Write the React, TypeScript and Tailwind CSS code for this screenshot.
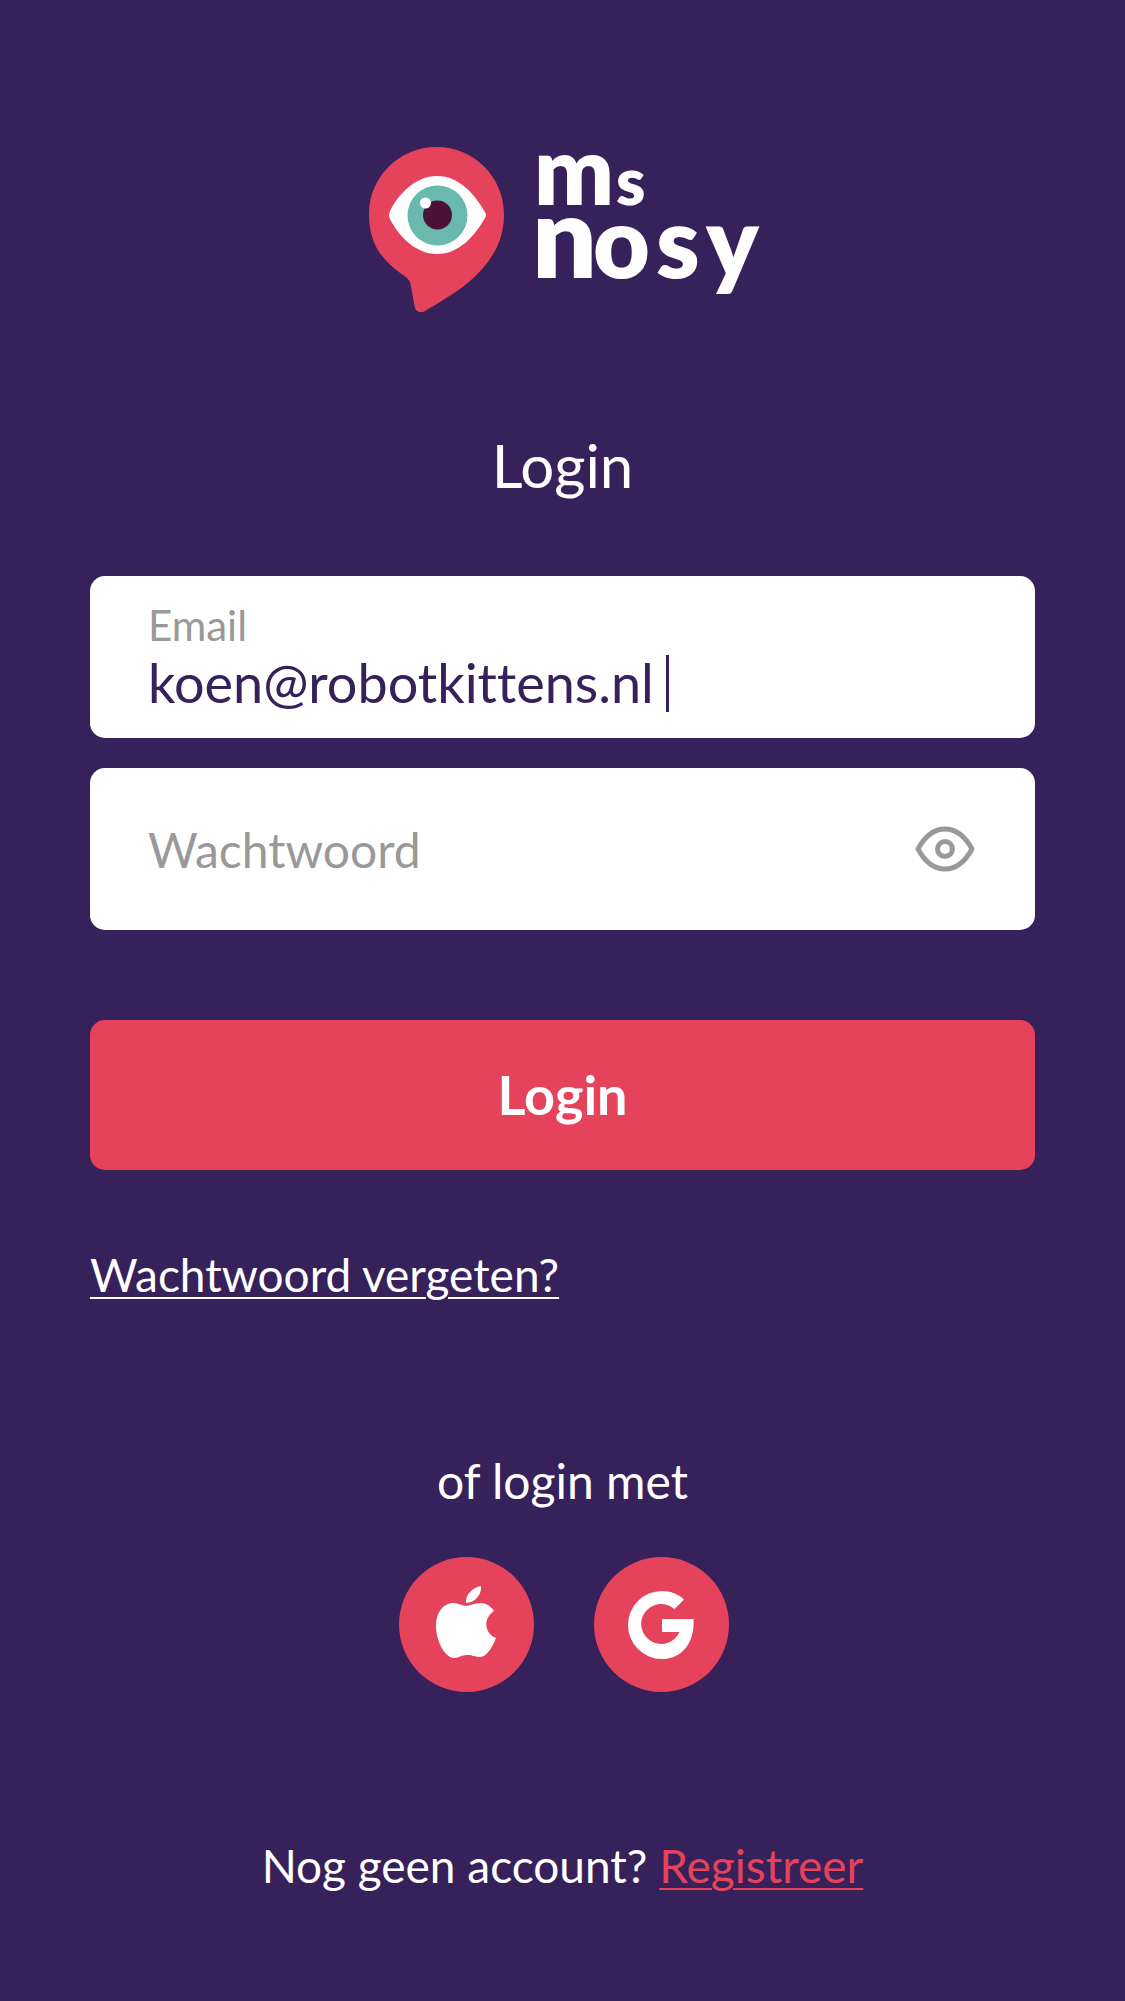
import { useState } from "react";

function Logo() {
  return (
    <svg viewBox="0 0 388 168" className="h-[168px] w-[388px] overflow-visible" role="img" aria-label="ms nosy">
      <path
        d="M67.500 0C105 0 135 30 135 67.500C135 98 119 118 101 134C87 146 69 156 56 164C51 167 46 164 45.500 159L41.500 137C41 133 38 131 34 128C14 114 0 98 0 67.500C0 30 30 0 67.500 0Z"
        fill="#e4435b"
      />
      <path
        d="M21 64C29 48 46 29 68 29C91 29 106 48 116 65Q118 68 116 71C106 88 91 107 68 107C46 107 29 88 21 72Q19 68 21 64Z"
        fill="#fff"
      />
      <circle cx="68.500" cy="68.500" r="30" fill="#6bb8ae" />
      <circle cx="68.500" cy="68" r="14.500" fill="#4b1237" />
      <circle cx="56.500" cy="56" r="5.500" fill="#fff" />
      <g fill="#fff" fontFamily="Lato, sans-serif" fontWeight="800">
        <text y="58" x="165" fontSize="94">m</text>
        <text y="58" x="247" fontSize="66">s</text>
        <text y="131" x="163" fontSize="114">n</text>
        <text y="131" x="224" fontSize="98">o</text>
        <text y="131" x="287" fontSize="98">s</text>
        <text y="131" x="337" fontSize="98">y</text>
      </g>
    </svg>
  );
}

function EyeIcon() {
  return (
    <svg viewBox="0 0 60 46" className="h-[46px] w-[60px]" fill="none" stroke="#999" strokeWidth="5" aria-hidden="true">
      <path d="M3 23C9 12 18 3 30 3S51 12 57 23C51 34 42 43 30 43S9 34 3 23Z" strokeLinejoin="round" />
      <circle cx="30" cy="23" r="7.500" />
    </svg>
  );
}

function AppleIcon() {
  return (
    <svg viewBox="0 0 60 78" className="h-[78px] w-[60px]" fill="#fff" aria-hidden="true">
      <path d="M45 0C46 8 39 17 30 17C29 9 37 1 45 0Z" />
      <path d="M30 20C34 20 38 17 44 17C50 17 55 20 58 25C47 32 48 47 60 52C57 60 51 71 44 71C39 71 37 69 31 69S23 72 18 72C9 72 0 55 0 40C0 26 8 17 17 17C23 17 26 20 30 20Z" />
    </svg>
  );
}

function GoogleIcon() {
  return (
    <svg viewBox="0 0 66 68" className="h-[68px] w-[66px]" fill="#fff" aria-hidden="true">
      <path d="M56 8.500L46.500 18A20 20 0 1 0 51.500 41H34V28H65.500C67 50 55 68 34 68A34 34 0 1 1 34 0C43 0 50 3 56 8.500Z" />
    </svg>
  );
}

export default function App() {
  const [email, setEmail] = useState("koen@robotkittens.nl");
  const [visible, setVisible] = useState(false);

  return (
    <main className="flex min-h-screen flex-col items-center bg-[#37215b] px-[8%] pt-[147px] pb-[90px] font-['Lato',sans-serif] text-white [font-variant-ligatures:none]">
      <Logo />
      <h1 className="mt-[112px] text-[60px] leading-[76px]">Login</h1>

      <form className="mt-[73px] flex w-full flex-col" onSubmit={(e) => e.preventDefault()}>
        <div className="flex h-[162px] flex-col justify-center rounded-[15px] bg-white px-[58px] pt-[4px]">
          <label htmlFor="email" className="text-[42px] leading-[48px] text-[#999]">
            Email
          </label>
          <div className="flex items-center gap-[12px]">
            <input
              id="email"
              type="text"
              inputMode="email"
              value={email}
              onChange={(e) => setEmail(e.target.value)}
              className="h-[68px] min-w-0 max-w-full [field-sizing:content] bg-transparent text-[54px] leading-[68px] text-[#37215b] outline-none"
            />
            <span className="h-[57px] w-[3px] shrink-0 bg-[#37215b]" />
          </div>
        </div>

        <div className="mt-[30px] flex h-[162px] items-center rounded-[15px] bg-white px-[58px]">
          <input
            type={visible ? "text" : "password"}
            aria-label="Wachtwoord"
            placeholder="Wachtwoord"
            className="h-full min-w-0 flex-1 bg-transparent text-[48px] text-[#37215b] outline-none placeholder:text-[#999]"
          />
          <button type="button" aria-label="Toon wachtwoord" className="pr-[2px]" onClick={() => setVisible(!visible)}>
            <EyeIcon />
          </button>
        </div>

        <button type="submit" className="mt-[90px] h-[150px] rounded-[15px] bg-[#e4435b] pb-[2px] text-[54px] font-bold">
          Login
        </button>
      </form>

      <a href="#wachtwoord" className="mt-[75px] self-start text-[46px] leading-[60px] underline decoration-2 underline-offset-[5px]">
        Wachtwoord vergeten?
      </a>

      <p className="mt-[146px] text-[48px] leading-[60px]">of login met</p>
      <div className="mt-[46px] flex gap-[60px] pl-[2px]">
        <button type="button" aria-label="Apple" className="flex size-[135px] items-center justify-center rounded-full bg-[#e4435b]">
          <AppleIcon />
        </button>
        <button type="button" aria-label="Google" className="flex size-[135px] items-center justify-center rounded-full bg-[#e4435b]">
          <GoogleIcon />
        </button>
      </div>

      <p className="mt-[144px] text-[46px] leading-[60px]">
        Nog geen account?{" "}
        <a href="#registreer" className="text-[#e4435b] underline decoration-2 underline-offset-[5px]">
          Registreer
        </a>
      </p>
    </main>
  );
}
